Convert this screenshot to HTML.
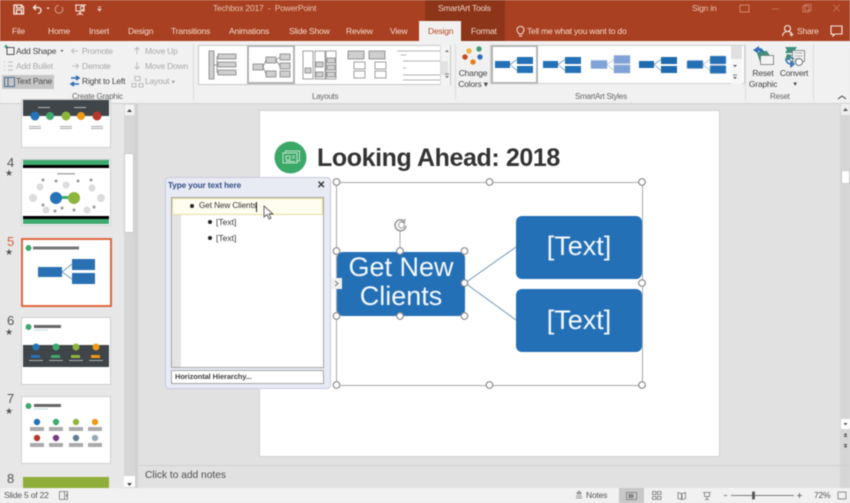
<!DOCTYPE html>
<html><head><meta charset="utf-8">
<style>
html,body{margin:0;padding:0;width:850px;height:503px;overflow:hidden;background:#e1e1e1}
#r{position:relative;width:850px;height:503px;overflow:hidden;font-family:"Liberation Sans",sans-serif;font-size:8.5px;letter-spacing:-.2px;color:#444;filter:blur(.4px)}
.a{position:absolute}
.t{position:absolute;white-space:nowrap;line-height:12px}
.w{color:#f3d9cf}
.g{color:#a8a8a8}
.d{color:#4a4a4a}
.c{transform:translateX(-50%)}
.l{font-size:8px;letter-spacing:-.25px;color:#666}
svg{position:absolute;overflow:visible}
</style></head><body><div id="r">
<!-- title bar -->
<div class="a" style="left:0;top:0;width:850px;height:41px;background:#a94021"></div>
<div class="a" style="left:425px;top:0;width:80px;height:41px;background:#8d3519"></div>
<div class="a" style="left:419px;top:21px;width:42px;height:20px;background:#f1f1f1"></div>
<svg style="left:0;top:0" width="850" height="41" fill="none" stroke="#f6ebe6" stroke-width="1.300">
<path d="M14 5h7.500l2 2v7h-9.500zM16.500 5v3h5V5M16.500 14v-4h5v4"/>
<path d="M36 5l-2.500 2.500 2.500 2.500M34 7.500h4c4 0 4 5.500 0 6"/><path d="M46.500 7.500h3l-1.500 2z" fill="#f6ebe6" stroke="none"/>
<path d="M59 5.500a3.800 3.800 0 1 0 3 1.500" stroke="#c98a72"/>
<path d="M75 5h11M76 5v6h8V5M80 11v4M77 15l3-2 3 2" stroke-width="1"/><circle cx="82" cy="8" r="1.800" stroke-width="1"/>
<path d="M98 7h3M98 9h3l-1.500 2z" stroke-width=".8"/>
<rect x="740" y="5" width="9" height="7" stroke="#d99b84" stroke-width=".8"/><path d="M772 9h7" stroke="#c9775c" stroke-width=".8"/>
<rect x="803" y="6" width="6" height="6" stroke="#d0876d" stroke-width=".8"/><rect x="805" y="4.500" width="6" height="6" stroke="#d0876d" stroke-width=".8"/>
<path d="M833 4.500l7 7M840 4.500l-7 7" stroke="#c9775c" stroke-width=".8"/>
<path d="M517 30a3.500 3.500 0 1 1 6 2.300l-1 1.700h-3l-1-1.700a3.500 3.500 0 0 1-1-2.300zM519 36h3" stroke-width=".9"/>
<circle cx="787.500" cy="28.500" r="3" stroke-width="1.100"/><path d="M782.500 36c.5-3.500 2.500-4.500 5-4.500 2 0 3 .5 4 1.500M789.500 34.500h4M791.500 32.500v4" stroke-width="1.100"/>
<path d="M831 26h11v8h-7l-2 2v-2h-2z" stroke-width="1.100"/>
</svg>
<span class="t" style="left:213px;top:2px;color:#e8c3b4">Techbox 2017&nbsp; -&nbsp; PowerPoint</span>
<span class="t" style="left:438px;top:2px;color:#edd3c8">SmartArt Tools</span>
<span class="t" style="left:692px;top:2px;color:#e8c3b4">Sign in</span>
<span class="t w" style="left:12px;top:25px">File</span>
<span class="t w" style="left:48px;top:25px">Home</span>
<span class="t w" style="left:89px;top:25px">Insert</span>
<span class="t w" style="left:128px;top:25px">Design</span>
<span class="t w" style="left:171px;top:25px">Transitions</span>
<span class="t w" style="left:229px;top:25px">Animations</span>
<span class="t w" style="left:289px;top:25px">Slide Show</span>
<span class="t w" style="left:346px;top:25px">Review</span>
<span class="t w" style="left:390px;top:25px">View</span>
<span class="t" style="left:428px;top:25px;color:#b5492a">Design</span>
<span class="t w" style="left:471px;top:25px">Format</span>
<span class="t w" style="left:527px;top:25px">Tell me what you want to do</span>
<span class="t w" style="left:797px;top:25px">Share</span>
<!-- ribbon -->
<div class="a" style="left:0;top:41px;width:850px;height:62px;background:#f1f1f1;border-bottom:1px solid #d2d2d2"></div>
<div class="a" style="left:2px;top:75px;width:52px;height:14px;background:#c6c6c6"></div>
<div class="a" style="left:193px;top:44px;width:1px;height:56px;background:#dcdcdc"></div>
<div class="a" style="left:455px;top:44px;width:1px;height:56px;background:#dcdcdc"></div>
<div class="a" style="left:745px;top:44px;width:1px;height:56px;background:#dcdcdc"></div>
<div class="a" style="left:813px;top:44px;width:1px;height:56px;background:#dcdcdc"></div>
<svg style="left:0;top:41px" width="200" height="50" fill="none" stroke="#666" stroke-width="1">
<rect x="7" y="6.500" width="7" height="7" stroke="#555"/><path d="M6 3.500v4M4 5.500h4" stroke="#3a9a6a"/>
<path d="M4 21h1M8 21h5M4 25h1M8 25h5M4 29h1M8 29h5" stroke="#bbb"/>
<rect x="4.500" y="36.500" width="10" height="9" stroke="#4a6d9c"/><path d="M8 37v8" stroke="#4a6d9c"/>
<path d="M78 10h-6M74 7.500l-2.500 2.500 2.500 2.500M72 25h6M76 22.500l2.500 2.500-2.500 2.500M137 13V6.500M134.500 9l2.500-2.500 2.500 2.500M137 21v7M134.500 25.500l2.500 2.500 2.500-2.500" stroke="#bdbdbd"/>
<path d="M71 37h7M76 35l3 2-3 2" stroke="#2a6db5" stroke-width="1.500"/><path d="M79 43h-7M74 41l-3 2 3 2" stroke="#2a6db5" stroke-width="1.500"/>
<rect x="135" y="35.500" width="5" height="4" stroke="#bbb"/><rect x="132" y="42.500" width="4" height="3.500" stroke="#bbb"/><rect x="139" y="42.500" width="4" height="3.500" stroke="#bbb"/>
<path d="M60.500 9h3l-1.500 2z" fill="#555" stroke="none"/>
</svg>
<span class="t" style="left:16px;top:45px;color:#444">Add Shape</span>
<span class="t g" style="left:16px;top:60px">Add Bullet</span>
<span class="t d" style="left:16px;top:75px">Text Pane</span>
<span class="t g" style="left:82px;top:45px">Promote</span>
<span class="t g" style="left:82px;top:60px">Demote</span>
<span class="t" style="left:82px;top:75px;color:#444">Right to Left</span>
<span class="t g" style="left:145px;top:45px">Move Up</span>
<span class="t g" style="left:145px;top:60px">Move Down</span>
<span class="t g" style="left:145px;top:75px">Layout <small>▾</small></span>
<span class="t l" style="left:72px;top:91px">Create Graphic</span>
<span class="t l" style="left:312px;top:91px">Layouts</span>
<span class="t l" style="left:575px;top:91px">SmartArt Styles</span>
<span class="t l" style="left:770px;top:91px">Reset</span>
<!-- layouts gallery -->
<div class="a" style="left:198px;top:45px;width:251px;height:38px;background:#fff;border:1px solid #c8c8c8"></div>
<div class="a" style="left:247px;top:45px;width:48px;height:39px;background:#fff;border:2px solid #b4b4b4;box-sizing:border-box"></div>
<div class="a" style="left:440px;top:45px;width:9px;height:40px;background:#f4f4f4;border-left:1px solid #ddd"></div>
<svg style="left:198px;top:45px" width="260" height="40" fill="#cfcfcf" stroke="#777" stroke-width=".7">
<rect x="11" y="6" width="5" height="28"/><rect x="20" y="9" width="18" height="5"/><rect x="20" y="17" width="18" height="5"/><rect x="20" y="25" width="18" height="5"/><path d="M16 20h3M19 11v17" fill="none"/>
<rect x="55" y="19" width="10" height="6"/><rect x="68" y="12" width="10" height="6"/><rect x="68" y="26" width="10" height="6"/><rect x="82" y="9" width="10" height="6"/><rect x="82" y="18" width="10" height="6"/><rect x="82" y="26" width="10" height="6"/><path d="M65 22l3-7M65 22l3 7M78 15l4-3M78 15l4 6" fill="none"/>
<g fill="#fff"><rect x="105" y="6" width="10" height="28"/><rect x="117" y="6" width="10" height="28"/><rect x="128" y="6" width="10" height="28"/></g>
<g><rect x="107" y="23" width="6" height="5"/><rect x="118" y="17" width="7" height="5"/><rect x="118" y="27" width="7" height="5"/><rect x="129" y="13" width="8" height="5"/><rect x="129" y="20" width="8" height="5"/><rect x="129" y="27" width="8" height="5"/></g>
<rect x="150" y="6" width="16" height="8"/><rect x="171" y="6" width="16" height="8"/><g fill="#fff"><rect x="156" y="17" width="11" height="7"/><rect x="156" y="26" width="11" height="7"/><rect x="177" y="17" width="11" height="7"/><rect x="177" y="26" width="11" height="7"/></g>
<path d="M199 6h43M203 10h5M205 16h37M205 23h3M205 30h37M205 35h37" fill="none" stroke="#999"/>
<rect x="243" y="16" width="7" height="14" fill="#e2e2e2" stroke="none"/>
</svg>
<!-- change colors -->
<svg style="left:458px;top:45px" width="32" height="20" stroke="none"><circle cx="11" cy="6" r="2.700" fill="#f0b23c"/><circle cx="21" cy="4" r="2.700" fill="#3f9d72"/><circle cx="7" cy="12" r="2.700" fill="#c4491f"/><circle cx="22" cy="12" r="2.700" fill="#2f6fb5"/><circle cx="15" cy="17" r="2.700" fill="#e67e1e"/></svg>
<span class="t c" style="left:473px;top:67px">Change</span>
<span class="t c" style="left:473px;top:78px">Colors ▾</span>
<!-- styles gallery -->
<div class="a" style="left:490px;top:45px;width:255px;height:39px;background:#fff;border:1px solid #d0d0d0;box-sizing:border-box"></div>
<div class="a" style="left:491px;top:45px;width:47px;height:39px;background:#fff;border:2px solid #b5b5b5;box-sizing:border-box"></div>
<div class="a" style="left:731px;top:46px;width:11px;height:38px;background:#f7f7f7"></div>
<div class="a" style="left:731px;top:46px;width:11px;height:13px;background:#e0e0e0"></div>
<svg style="left:490px;top:45px" width="260" height="40" fill="#2470b6" stroke="none">
<g><rect x="5" y="16" width="15" height="7"/><rect x="27" y="12" width="16" height="7"/><rect x="27" y="21" width="16" height="7"/><path d="M20 19.500l7-5M20 19.500l7 6" fill="none" stroke="#6f98b8" stroke-width=".8"/></g>
<g transform="translate(48 0)"><rect x="5" y="16" width="15" height="7"/><rect x="27" y="12" width="16" height="7"/><rect x="27" y="21" width="16" height="7"/><path d="M20 19.500l7-5M20 19.500l7 6" fill="none" stroke="#6f98b8" stroke-width=".8"/></g>
<g transform="translate(96 0)" fill="#7fa3d8" stroke="#9fb5cf" stroke-width=".6"><rect x="5" y="15.500" width="16" height="8"/><rect x="28" y="10.500" width="16" height="8"/><rect x="28" y="20" width="16" height="8"/><path d="M21 19.500l7-5M21 19.500l7 6" fill="none"/></g>
<g transform="translate(144 0)" fill="#1f69ad"><rect x="5" y="16" width="15" height="7"/><rect x="27" y="12" width="16" height="7"/><rect x="27" y="21" width="16" height="7"/><path d="M20 19.500l7-5M20 19.500l7 6" fill="none" stroke="#6f98b8" stroke-width=".8"/></g>
<g transform="translate(192 0)" fill="#2470b6" stroke="#8fa9c4" stroke-width=".6"><rect x="5" y="15.500" width="16" height="8" rx="1"/><rect x="28" y="11" width="16" height="8" rx="1"/><rect x="28" y="20.500" width="16" height="8" rx="1"/><path d="M21 19.500l7-5M21 19.500l7 6" fill="none"/></g>
<g fill="#555"><path d="M243 20h4l-2 2zM243 32h4l-2 2z"/></g><path d="M243 30h4" stroke="#555" stroke-width=".8"/>
<g fill="#666"><path d="M-45 7l2-2 2 2zM-45 31h4l-2 2z"/></g><path d="M-45 29h4" stroke="#666" stroke-width=".8"/>
</svg>
<!-- reset / convert -->
<svg style="left:752px;top:44px" width="60" height="36" stroke="none">
<path d="M5 9l3-2h7l5 8v3H8z" fill="#3f8f7c"/><rect x="8.500" y="11.500" width="13" height="9" fill="#f4f4f4" stroke="#777" stroke-width=".8"/>
<path d="M7 2L1 6l5 3.500V7c3 0 5 .5 6 3 0-4.500-2-6-5-6z" fill="#2f6fb5"/>
<path d="M33 3h12l-2 3 2 3H33l2-3z" fill="#3f8f7c"/><path d="M35 10l5 1-2 3 1 2h-6z" fill="#3f8f7c"/>
<rect x="40.500" y="6.500" width="12" height="11" fill="#f4f4f4" stroke="#777" stroke-width=".8"/><path d="M42.500 9h8M42.500 12h8M42.500 15h5" stroke="#999" stroke-width=".7"/>
<circle cx="47" cy="18" r="3.500" fill="#fff" stroke="#666" stroke-width=".9"/>
<path d="M34 15a5 5 0 0 0 6 5M42 20l-3 2.500v-5zM38 13l4 2" fill="none" stroke="#2f6fb5" stroke-width="1.500"/>
</svg>
<span class="t c" style="left:763px;top:67px">Reset</span>
<span class="t c" style="left:763px;top:78px">Graphic</span>
<span class="t c" style="left:794px;top:67px">Convert</span>
<span class="t c" style="left:795px;top:79px;font-size:7px">▾</span>
<svg style="left:837px;top:94px" width="10" height="6" fill="none" stroke="#444"><path d="M1 5l4-3 4 3"/></svg>
<!-- main -->
<div class="a" style="left:0;top:104px;width:124px;height:384px;background:#e7e7e7"></div>
<div class="a" style="left:124px;top:104px;width:11px;height:384px;background:#d6d6d6"></div>
<div class="a" style="left:135px;top:104px;width:3px;height:384px;background:#d1d1d1"></div>
<div class="a" style="left:840px;top:104px;width:10px;height:384px;background:#d6d6d6"></div>
<div class="a" style="left:124px;top:104px;width:11px;height:12px;background:#f4f4f4;border:1px solid #ddd;box-sizing:border-box"></div>
<div class="a" style="left:124px;top:153px;width:10px;height:80px;background:#fff;border:1px solid #c9c9c9;box-sizing:border-box"></div>
<div class="a" style="left:124px;top:476px;width:11px;height:11px;background:#fff"></div>
<svg style="left:124px;top:104px" width="12" height="384" fill="#444"><path d="M3 8l2.500-3 2.500 3zM3 379h5l-2.500 3z"/></svg>
<div class="a" style="left:841px;top:104px;width:9px;height:11px;background:#efefef"></div>
<div class="a" style="left:841px;top:170px;width:9px;height:14px;background:#fff;border:1px solid #c9c9c9;box-sizing:border-box"></div>
<div class="a" style="left:841px;top:419px;width:9px;height:10px;background:#fff"></div>
<svg style="left:841px;top:104px" width="9" height="350" fill="#555"><path d="M2 7l2.500-3 2.500 3zM2.500 319h4l-2 2.500z"/><path d="M2.500 331l2-2 2 2zM2.500 333l2-2 2 2zM2.500 340h4l-2 2zM2.500 342h4l-2 2z"/></svg>
<!-- slide -->
<div class="a" style="left:260px;top:111px;width:459px;height:345px;background:#fff;box-shadow:0 0 0 1px #d2d2d2"></div>
<!-- notes -->
<div class="a" style="left:138px;top:465px;width:712px;height:1px;background:#cfcfcf"></div>
<span class="t" style="left:145px;top:470px;font-size:10.200px;letter-spacing:0;color:#505050">Click to add notes</span>
<!-- status -->
<div class="a" style="left:0;top:488px;width:850px;height:15px;background:#f1f1f1"></div>
<div class="a" style="left:619px;top:488px;width:25px;height:15px;background:#c8c8c8"></div>
<span class="t" style="left:4px;top:489px;color:#555">Slide 5 of 22</span>
<span class="t" style="left:586px;top:489px;color:#555">Notes</span>
<span class="t" style="left:814px;top:489px;color:#555">72%</span>
<svg style="left:0;top:488px" width="850" height="15" fill="none" stroke="#777" stroke-width=".8">
<path d="M59.500 3.500h5v8h-5zM64.500 3.500h3v8h-3M66 6l1.500 3M67.500 6L66 9"/>
<path d="M576 10h6M576 8h6M577 6h4M579 3l-2 2h4z"/>
<rect x="626.500" y="4.500" width="10" height="7"/><rect x="629" y="6.500" width="4" height="3" fill="#888"/>
<rect x="652.500" y="3.500" width="3.500" height="3"/><rect x="657.500" y="3.500" width="3.500" height="3"/><rect x="652.500" y="8.500" width="3.500" height="3"/><rect x="657.500" y="8.500" width="3.500" height="3"/>
<path d="M678 4.500l3.500 1v6L678 10.500zM685.500 4.500l-3.500 1v6l3.500-1z"/>
<path d="M703 4.500h8M704.500 4.500v4h5v-4M707 8.500v2.500M705 12l2-1 2 1"/>
<path d="M724 7.500h3M731 7.500h63M802 7.500h-5M799.500 5v5" stroke="#555"/>
<rect x="752.500" y="4" width="2" height="7" fill="#555" stroke="#555"/>
<rect x="838" y="4" width="8" height="7"/>
</svg>
<!-- thumbnails -->
<div class="a" style="left:22px;top:100px;width:88px;height:47px;background:#fff;box-shadow:0 0 0 1px #cfcfcf"></div>
<svg style="left:22px;top:100px" width="88" height="47" stroke="none">
<rect x="1" y="0" width="86" height="16" fill="#3f4548"/>
<circle cx="13" cy="16" r="4.500" fill="#2573b8"/><circle cx="28" cy="16" r="4" fill="#3fa96e"/><circle cx="44" cy="16" r="4.500" fill="#8eb53b"/><circle cx="59" cy="16" r="4" fill="#f09a14"/><circle cx="75" cy="16" r="4.500" fill="#b7372a"/>
<rect x="16" y="7" width="12" height="1" fill="#bbb"/><rect x="52" y="7" width="12" height="1" fill="#bbb"/>
<g fill="#aaa"><rect x="7" y="26" width="12" height="1"/><rect x="38" y="26" width="12" height="1"/><rect x="69" y="26" width="12" height="1"/><rect x="7" y="28" width="12" height="1"/><rect x="38" y="28" width="12" height="1"/><rect x="69" y="28" width="12" height="1"/></g>
</svg>
<div class="a" style="left:22px;top:160px;width:88px;height:65px;background:#fff;box-shadow:0 0 0 1px #cfcfcf"></div>
<svg style="left:22px;top:160px" width="88" height="65" stroke="none">
<rect x="1" y="0" width="86" height="5" fill="#3fa96e"/><rect x="1" y="5" width="86" height="3" fill="#000"/><rect x="1" y="56" width="86" height="3" fill="#000"/><rect x="1" y="59" width="86" height="5" fill="#3fa96e"/>
<rect x="35" y="13" width="18" height="1.500" fill="#aaa"/>
<g fill="#dcdcdc"><circle cx="11" cy="38" r="4"/><circle cx="18" cy="27" r="3.500"/><circle cx="44" cy="25" r="3.500"/><circle cx="70" cy="28" r="3.500"/><circle cx="79" cy="38" r="4"/><circle cx="24" cy="50" r="3.500"/><circle cx="65" cy="50" r="3.500"/></g>
<g fill="#999"><circle cx="21" cy="20" r="1.500"/><circle cx="34" cy="21" r="1.500"/><circle cx="56" cy="21" r="1.500"/><circle cx="69" cy="20" r="1.500"/><circle cx="21" cy="45" r="1.500"/><circle cx="33" cy="51" r="1.500"/><circle cx="40" cy="48" r="1.500"/><circle cx="52" cy="50" r="1.500"/><circle cx="72" cy="47" r="1.500"/></g>
<circle cx="34" cy="38" r="6" fill="#2573b8"/><rect x="40" y="36" width="6" height="3" fill="#3fa96e"/><circle cx="52" cy="38" r="6" fill="#8eb53b"/>
</svg>
<div class="a" style="left:21px;top:238px;width:91px;height:69px;background:#fff;border:2px solid #e0663f;box-sizing:border-box"></div>
<svg style="left:21px;top:238px" width="91" height="69" stroke="none">
<circle cx="7.500" cy="10" r="3" fill="#3fa96e"/><rect x="12" y="8.500" width="46" height="3" fill="#777"/>
<rect x="17" y="29" width="24" height="10" fill="#2a70b3"/><rect x="51" y="21" width="23" height="11" fill="#2a70b3"/><rect x="51" y="35" width="23" height="11" fill="#2a70b3"/><path d="M41 34l10-8M41 34l10 7" stroke="#6f98b8" fill="none"/>
</svg>
<div class="a" style="left:22px;top:318px;width:88px;height:66px;background:#fff;box-shadow:0 0 0 1px #cfcfcf"></div>
<svg style="left:22px;top:318px" width="88" height="66" stroke="none">
<circle cx="6.500" cy="9" r="3" fill="#3fa96e"/><rect x="12" y="7" width="27" height="3" fill="#666"/><rect x="12" y="11.500" width="14" height="1" fill="#bdd"/>
<rect x="1" y="27" width="86" height="22" fill="#3f4548"/>
<circle cx="14" cy="29" r="3.500" fill="#2573b8"/><circle cx="34" cy="29" r="3.500" fill="#3fa96e"/><circle cx="54" cy="29" r="3.500" fill="#8eb53b"/><circle cx="74" cy="29" r="3.500" fill="#f09a14"/>
<rect x="9" y="37" width="9" height="3" fill="#2573b8"/><rect x="29" y="37" width="9" height="3" fill="#3fa96e"/><rect x="49" y="37" width="9" height="3" fill="#8eb53b"/><rect x="69" y="37" width="9" height="3" fill="#f09a14"/>
<g fill="#aaa"><rect x="7" y="42" width="14" height="1"/><rect x="27" y="42" width="14" height="1"/><rect x="47" y="42" width="14" height="1"/><rect x="67" y="42" width="14" height="1"/></g>
</svg>
<div class="a" style="left:22px;top:397px;width:88px;height:66px;background:#fff;box-shadow:0 0 0 1px #cfcfcf"></div>
<svg style="left:22px;top:397px" width="88" height="66" stroke="none">
<circle cx="6.500" cy="9" r="3" fill="#3fa96e"/><rect x="12" y="7" width="27" height="3" fill="#666"/><rect x="12" y="11.500" width="14" height="1" fill="#bdd"/>
<circle cx="15" cy="25" r="3.200" fill="#2573b8"/><circle cx="34" cy="25" r="3.200" fill="#3fa96e"/><circle cx="54" cy="25" r="3.200" fill="#8eb53b"/><circle cx="73" cy="25" r="3.200" fill="#f09a14"/>
<circle cx="15" cy="41" r="3.200" fill="#b7372a"/><circle cx="34" cy="41" r="3.200" fill="#7a3b86"/><circle cx="54" cy="41" r="3.200" fill="#5f7f95"/><circle cx="73" cy="41" r="3.200" fill="#9aaab5"/>
<g fill="#aaa"><rect x="8" y="30" width="14" height="4"/><rect x="27" y="30" width="14" height="4"/><rect x="47" y="30" width="14" height="4"/><rect x="66" y="30" width="14" height="4"/><rect x="8" y="46" width="14" height="4"/><rect x="27" y="46" width="14" height="4"/><rect x="47" y="46" width="14" height="4"/><rect x="66" y="46" width="14" height="4"/></g>
</svg>
<div class="a" style="left:23px;top:477px;width:86px;height:11px;background:#8fae3a"></div>
<span class="t" style="left:7px;top:157px;font-size:13px;letter-spacing:0;color:#555">4</span>
<span class="t" style="left:7px;top:236px;font-size:13px;letter-spacing:0;color:#d2603a">5</span>
<span class="t" style="left:7px;top:315px;font-size:13px;letter-spacing:0;color:#555">6</span>
<span class="t" style="left:7px;top:393px;font-size:13px;letter-spacing:0;color:#555">7</span>
<span class="t" style="left:7px;top:473px;font-size:13px;letter-spacing:0;color:#555">8</span>
<span class="t" style="left:5px;top:167px;font-size:9px;color:#555">★</span>
<span class="t" style="left:5px;top:246px;font-size:9px;color:#555">★</span>
<span class="t" style="left:5px;top:326px;font-size:9px;color:#555">★</span>
<span class="t" style="left:5px;top:405px;font-size:9px;color:#555">★</span>
<!-- slide content -->
<svg style="left:274px;top:141px" width="34" height="34" stroke="none"><circle cx="16.500" cy="16.500" r="16" fill="#3aa867"/><g fill="none" stroke="#bfe3cd" stroke-width="1"><path d="M9 12h14v10H9zM11.500 12v-2h14v10h-2"/><rect x="12" y="15" width="4" height="4"/><path d="M18 15h3M18 17h3M12 20.500h9"/></g></svg>
<span class="t" style="left:317px;top:142px;line-height:32px;font-size:25px;letter-spacing:-.4px;font-weight:bold;color:#333">Looking Ahead: 2018</span>
<!-- smartart -->
<svg style="left:330px;top:175px" width="320" height="218">
<rect x="6.500" y="7.500" width="306" height="203" fill="none" stroke="#aaa" stroke-width="1"/>
<path d="M135 108l51-36M135 108l51 37" fill="none" stroke="#6f98b8" stroke-width="1"/>
<rect x="7" y="77" width="128" height="64" rx="6" fill="#2470b6"/>
<rect x="186" y="41" width="126" height="63" rx="6" fill="#2470b6"/>
<rect x="186" y="114" width="126" height="63" rx="6" fill="#2470b6"/>
<path d="M70 77V55" stroke="#aaa" fill="none"/>
<g fill="none" stroke="#9a9a9a" stroke-width="1.600"><path d="M76 51a5.500 5.500 0 1 1-2-5"/><path d="M75 44l-.5 3.500-3.500-1" stroke-width="1.200"/><circle cx="71.500" cy="50" r="3" stroke-width="1"/></g>
<g fill="#fff" stroke="#8c8c8c" stroke-width="1.200">
<circle cx="6.500" cy="7" r="3.300"/><circle cx="159.500" cy="7" r="3.300"/><circle cx="312" cy="7" r="3.300"/>
<circle cx="6.500" cy="210" r="3.300"/><circle cx="159.500" cy="210" r="3.300"/><circle cx="312" cy="210" r="3.300"/>
<circle cx="312" cy="108" r="3.300"/>
<circle cx="6.500" cy="76" r="3.300"/><circle cx="70" cy="76" r="3.300"/><circle cx="134.500" cy="76" r="3.300"/>
<circle cx="6.500" cy="141" r="3.300"/><circle cx="70" cy="141" r="3.300"/><circle cx="134.500" cy="141" r="3.300"/><circle cx="134.500" cy="108" r="3.300"/>
</g>
</svg>
<span class="t c" style="left:401px;top:253px;font-size:27px;letter-spacing:0;line-height:29px;color:#f4f8fb;text-align:center;width:128px">Get New<br>Clients</span>
<span class="t c" style="left:579px;top:228px;font-size:27px;letter-spacing:0;line-height:36px;color:#f4f8fb">[Text]</span>
<span class="t c" style="left:579px;top:302px;font-size:27px;letter-spacing:0;line-height:36px;color:#f4f8fb">[Text]</span>
<!-- text pane -->
<div class="a" style="left:165px;top:177px;width:166px;height:212px;background:#e8eaf4;border:1px solid #c9ccdb;border-radius:4px;box-sizing:border-box"></div>
<div class="a" style="left:171px;top:197px;width:153px;height:171px;background:#fff;border:1px solid #a5a5a5;box-sizing:border-box"></div>
<div class="a" style="left:172px;top:198px;width:9px;height:169px;background:#e4e4e4"></div>
<div class="a" style="left:172px;top:198px;width:151px;height:17px;background:#fffdf0;border:1px solid #eadf9c;box-sizing:border-box"></div>
<div class="a" style="left:171px;top:370px;width:153px;height:14px;background:#fff;border:1px solid #a5a5a5;box-sizing:border-box"></div>
<span class="t" style="left:168px;top:180px;font-size:8.200px;letter-spacing:-.1px;font-weight:bold;color:#2f4f86">Type your text here</span>
<span class="t" style="left:317px;top:180px;font-size:10px;font-weight:bold;color:#333">✕</span>
<span class="t" style="left:175px;top:371px;font-size:7.500px;letter-spacing:-.1px;font-weight:bold;color:#444">Horizontal Hierarchy...</span>
<span class="t" style="left:199px;top:200px;font-size:8.200px;letter-spacing:-.1px;color:#333">Get New Clients</span>
<div class="a" style="left:256px;top:202px;width:1px;height:10px;background:#222"></div>
<span class="t" style="left:216px;top:216px;font-size:8.500px;letter-spacing:0;color:#333">[Text]</span>
<span class="t" style="left:216px;top:232px;font-size:8.500px;letter-spacing:0;color:#333">[Text]</span>
<div class="a" style="left:190px;top:204px;width:4px;height:4px;border-radius:50%;background:#222"></div>
<div class="a" style="left:208px;top:220px;width:4px;height:4px;border-radius:50%;background:#222"></div>
<div class="a" style="left:208px;top:236px;width:4px;height:4px;border-radius:50%;background:#222"></div>
<div class="a" style="left:331px;top:278px;width:11px;height:11px;background:#f1f1f1"></div>
<svg style="left:331px;top:278px" width="11" height="11" fill="none" stroke="#777"><path d="M4 3l3 2.500-3 2.500"/></svg>
<svg style="left:263px;top:205px" width="12" height="16"><path d="M1 1v11l3-2.500 2 4.500 2-1-2-4h4z" fill="#fff" stroke="#555" stroke-width=".9"/></svg>
</div></body></html>
